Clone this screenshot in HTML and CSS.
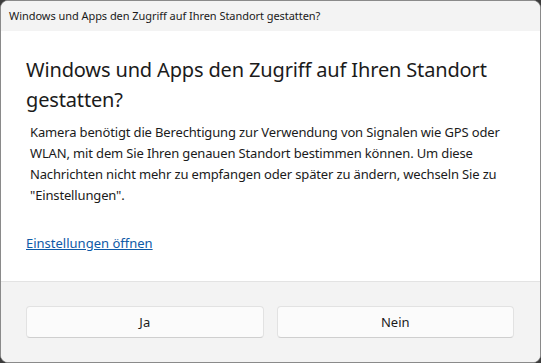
FILE: index.html
```html
<!DOCTYPE html>
<html lang="de">
<head>
  <meta charset="UTF-8">
  <title>Standortzugriff</title>
  <link rel="stylesheet" href="styles.css">
</head>
<body>
  <div class="dialog">
    <div class="titlebar">Windows und Apps den Zugriff auf Ihren Standort gestatten?</div>
    <div class="content">
      <h1>Windows und Apps den Zugriff auf Ihren Standort gestatten?</h1>
      <p class="message">Kamera benötigt die Berechtigung zur Verwendung von Signalen wie GPS oder WLAN, mit dem Sie Ihren genauen Standort bestimmen können. Um diese Nachrichten nicht mehr zu empfangen oder später zu ändern, wechseln Sie zu "Einstellungen".</p>
      <a class="link" href="#">Einstellungen öffnen</a>
    </div>
    <div class="footer">
      <button class="btn">Ja</button>
      <button class="btn">Nein</button>
    </div>
  </div>
</body>
</html>
```

FILE: styles.css
```css
html, body {
  margin: 0;
  height: 100%;
}
body {
  background: #3c3c3c;
  font-family: "Noto Sans", "Open Sans", sans-serif;
  color: #1b1b1b;
}
.dialog {
  box-sizing: border-box;
  width: 541px;
  height: 363px;
  border: 1px solid #8a8a8a;
  border-radius: 8px;
  overflow: hidden;
  display: flex;
  flex-direction: column;
  background: #fff;
}
.titlebar {
  height: 30px;
  background: #f3f3f3;
  font-size: 11px;
  line-height: 30px;
  padding-left: 8px;
  color: #1a1a1a;
  letter-spacing: -0.05px;
}
.content {
  flex: 1;
  padding: 24px 25px 0 25px;
}
.content h1 {
  margin: 0;
  font-size: 20px;
  font-weight: 400;
  line-height: 30px;
  letter-spacing: -0.15px;
}
.message {
  margin: 7px 0 0 4px;
  font-size: 13px;
  line-height: 21px;
  letter-spacing: -0.15px;
}
.link {
  display: inline-block;
  margin-top: 28px;
  font-size: 13px;
  color: #0e5aa7;
  text-decoration: underline;
}
.footer {
  height: 81px;
  box-sizing: border-box;
  background: #f3f3f3;
  border-top: 1px solid #e3e3e3;
  display: flex;
  gap: 13px;
  padding: 24px 26px 0 25px;
}
.btn {
  flex: 1;
  height: 32px;
  background: #fbfbfb;
  border: 1px solid #e2e2e2;
  border-bottom-color: #cfcfcf;
  border-radius: 4px;
  font-family: inherit;
  font-size: 13px;
  color: #1b1b1b;
}
```
